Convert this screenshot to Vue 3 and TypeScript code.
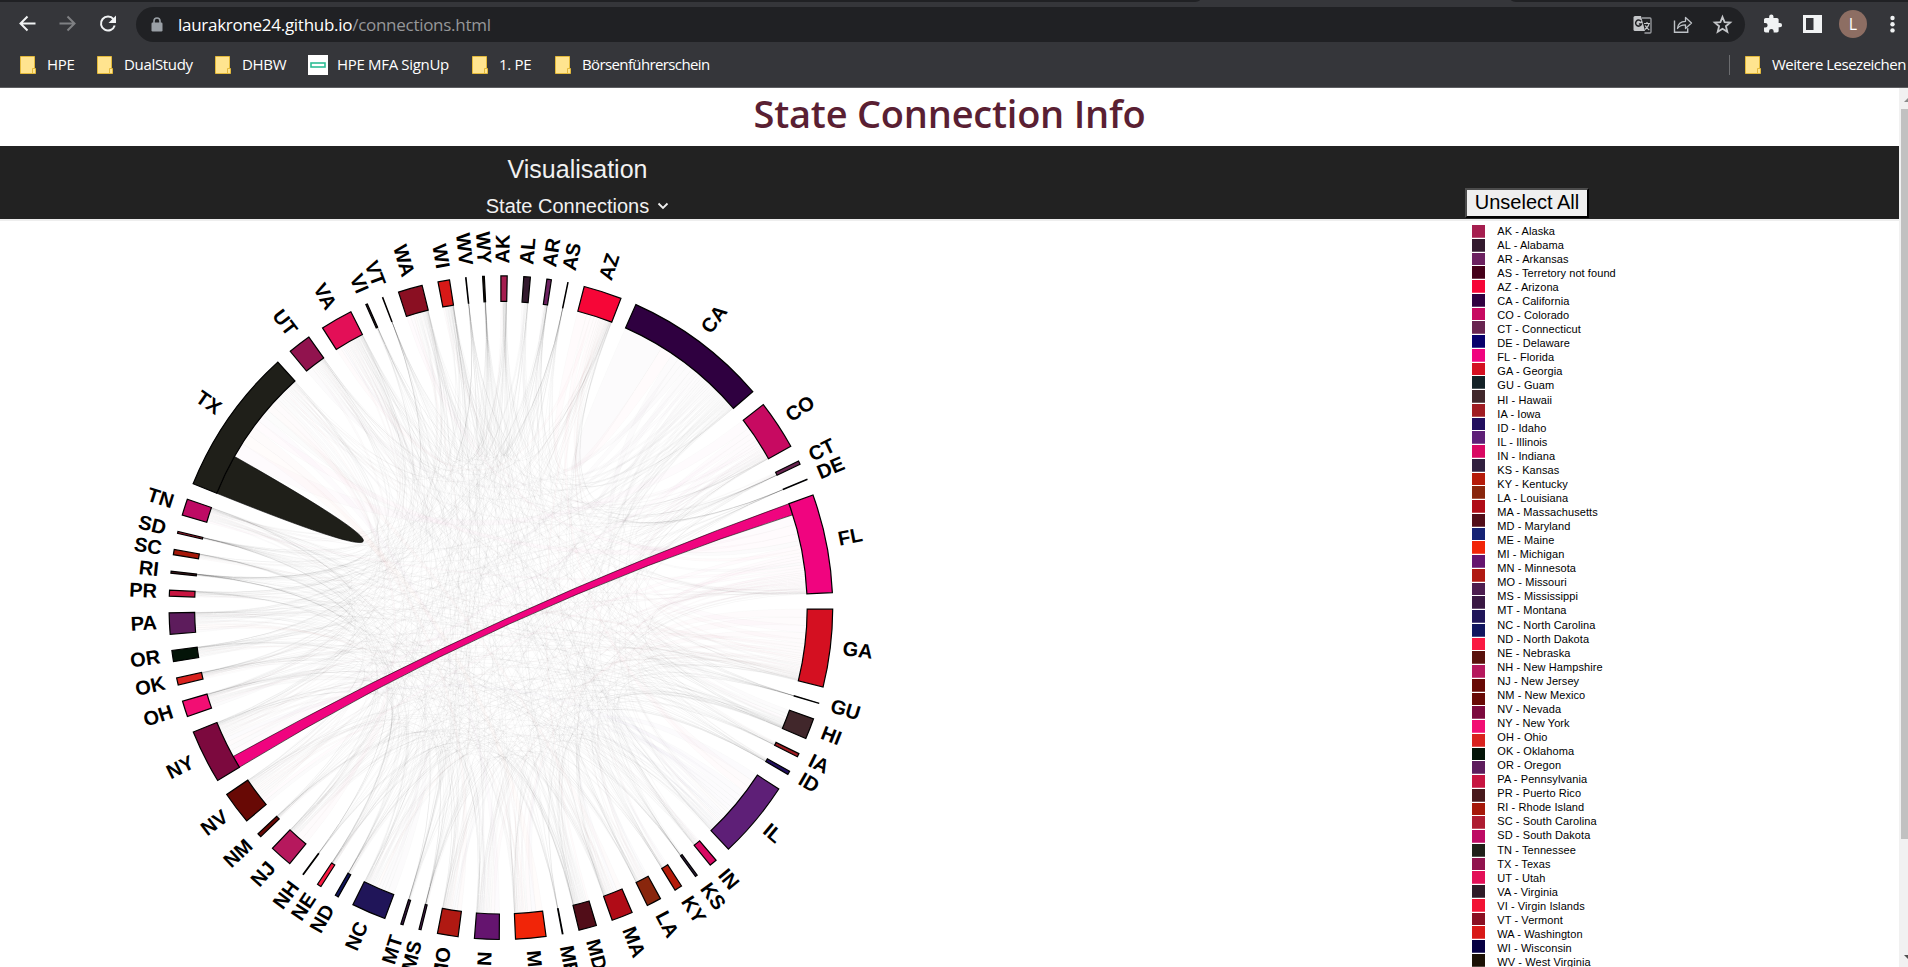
<script setup lang="ts">
interface Group { code: string; name: string; color: string; start: number; end: number }
interface Span { start: number; end: number }
interface Ribbon { d: string; color: string }

const raw: [string, string, string, number, number][] = [
  ['AK', 'Alaska', '#a51e4f', 0, 0.019],
  ['AL', 'Alabama', '#331a2e', 0.069, 0.089],
  ['AR', 'Arkansas', '#6c2160', 0.139, 0.1528],
  ['AS', 'Terretory not found', '#450019', 0.2028, 0.2038],
  ['AZ', 'Arizona', '#f60637', 0.2538, 0.3702],
  ['CA', 'California', '#2f0040', 0.419, 0.862],
  ['CO', 'Colorado', '#c70a61', 0.9122, 1.0627],
  ['CT', 'Connecticut', '#682450', 1.1127, 1.1235],
  ['DE', 'Delaware', '#07006c', 1.1735, 1.1745],
  ['FL', 'Florida', '#f0047f', 1.2243, 1.5253],
  ['GA', 'Georgia', '#d41021', 1.5753, 1.812],
  ['GU', 'Guam', '#132227', 1.8622, 1.8632],
  ['HI', 'Hawaii', '#41272b', 1.9123, 1.9762],
  ['IA', 'Iowa', '#a01c22', 2.0262, 2.0365],
  ['ID', 'Idaho', '#220f5f', 2.0865, 2.097],
  ['IL', 'Illinois', '#5e1f77', 2.149, 2.3859],
  ['IN', 'Indiana', '#d90862', 2.4359, 2.4587],
  ['KS', 'Kansas', '#31203f', 2.5087, 2.515],
  ['KY', 'Kentucky', '#b51b0a', 2.566, 2.589],
  ['LA', 'Louisiana', '#89260d', 2.64, 2.6845],
  ['MA', 'Massachusetts', '#b00c17', 2.735, 2.7996],
  ['MD', 'Maryland', '#510d18', 2.8497, 2.9039],
  ['ME', 'Maine', '#152274', 2.9535, 2.9555],
  ['MI', 'Michigan', '#f12508', 3.005, 3.0975],
  ['MN', 'Minnesota', '#65146f', 3.1465, 3.2215],
  ['MO', 'Missouri', '#b01912', 3.271, 3.334],
  ['MS', 'Mississippi', '#4c1d4f', 3.3848, 3.391],
  ['MT', 'Montana', '#391843', 3.441, 3.448],
  ['NC', 'North Carolina', '#201559', 3.499, 3.604],
  ['ND', 'North Dakota', '#10155f', 3.654, 3.664],
  ['NE', 'Nebraska', '#fa1a42', 3.7148, 3.7272],
  ['NH', 'New Hampshire', '#5a110c', 3.7785, 3.7805],
  ['NJ', 'New Jersey', '#b6185d', 3.8315, 3.901],
  ['NM', 'New Mexico', '#680905', 3.951, 3.963],
  ['NV', 'Nevada', '#680905', 4.0145, 4.1143],
  ['NY', 'New York', '#7c093e', 4.1645, 4.3282],
  ['OH', 'Ohio', '#f20e73', 4.3783, 4.4266],
  ['OK', 'Oklahoma', '#d9221e', 4.4773, 4.4992],
  ['OR', 'Oregon', '#041408', 4.549, 4.583],
  ['PA', 'Pennsylvania', '#5d1c5c', 4.632, 4.697],
  ['PR', 'Puerto Rico', '#c71440', 4.747, 4.7655],
  ['RI', 'Rhode Island', '#48191c', 4.8165, 4.8225],
  ['SC', 'South Carolina', '#a61809', 4.873, 4.889],
  ['SD', 'South Dakota', '#ae1c31', 4.9385, 4.944],
  ['TN', 'Tennessee', '#be0a64', 4.995, 5.0455],
  ['TX', 'Texas', '#1f1f19', 5.0952, 5.5457],
  ['UT', 'Utah', '#91134e', 5.5955, 5.666],
  ['VA', 'Virginia', '#e30f57', 5.7155, 5.814],
  ['VI', 'Virgin Islands', '#2f1b27', 5.864, 5.869],
  ['VT', 'Vermont', '#f21334', 5.9185, 5.9195],
  ['WA', 'Washington', '#8a0f22', 5.9695, 6.0435],
  ['WI', 'Wisconsin', '#d81917', 6.0925, 6.1277],
  ['WV', 'West Virginia', '#070043', 6.1767, 6.178],
  ['WY', 'Wyoming', '#1b1105', 6.228, 6.2332],
]
const groups: Group[] = raw.map(([code, name, color, start, end]) => ({ code, name, color, start, end }))

const CX = 500.9
const CY = 386.7
const INNER = 306.3
const OUTER = 331.8

const pt = (a: number, r: number): string => `${(Math.sin(a) * r).toFixed(2)},${(-Math.cos(a) * r).toFixed(2)}`

const arcPath = (g: Span): string =>
  `M${pt(g.start, OUTER)}A${OUTER},${OUTER} 0 0 1 ${pt(g.end, OUTER)}L${pt(g.end, INNER)}A${INNER},${INNER} 0 0 0 ${pt(g.start, INNER)}Z`

const ribbonPath = (s: Span, t: Span): string => {
  const first = `M${pt(s.start, INNER)}A${INNER},${INNER} 0 0 1 ${pt(s.end, INNER)}`
  if (s === t) return `${first}Q0,0 ${pt(s.start, INNER)}Z`
  return `${first}Q0,0 ${pt(t.start, INNER)}A${INNER},${INNER} 0 0 1 ${pt(t.end, INNER)}Q0,0 ${pt(s.start, INNER)}Z`
}

const labelTransform = (g: Group): string => {
  const mid = (g.start + g.end) / 2
  const turn = mid > Math.PI ? ' rotate(180)' : ''
  return `rotate(${((mid * 180) / Math.PI - 90).toFixed(3)}) translate(${OUTER + 12.5})${turn}`
}
const labelAnchor = (g: Group): 'start' | 'end' => ((g.start + g.end) / 2 > Math.PI ? 'end' : 'start')

let seed = 20231
const random = (): number => {
  seed = (seed * 1664525 + 1013904223) % 4294967296
  return seed / 4294967296
}

const size = groups.map(g => g.end - g.start)
const indexOf = (code: string): number => groups.findIndex(g => g.code === code)
const n = groups.length
const link: number[][] = groups.map(() => new Array<number>(n).fill(0))
for (let i = 0; i < n; i++) {
  for (let j = i; j < n; j++) {
    const keep = random() < 0.3 + 4 * Math.sqrt(size[i] * size[j])
    const w = keep ? 0.06 + Math.pow(random(), 3) : 0
    link[i][j] = link[j][i] = i === j ? w * 0.6 : w
  }
}
const pinned: Record<string, [number, number]> = {
  TX: [indexOf('TX'), 0.1335],
  FL: [indexOf('NY'), 0.0384],
  NY: [indexOf('FL'), 0.0407],
  CA: [indexOf('CA'), 0.135],
}
for (const [code, [target]] of Object.entries(pinned)) link[indexOf(code)][target] = 1

const spans: (Span | null)[][] = groups.map((g, i) => {
  const row: (Span | null)[] = new Array(n).fill(null)
  let cursor = g.start
  const pin = pinned[g.code]
  if (pin) {
    row[pin[0]] = { start: cursor, end: cursor + pin[1] }
    cursor += pin[1]
  }
  const rest = groups
    .map((_, j) => ({ j, w: link[i][j] * Math.pow(size[j] + 0.004, 0.6) }))
    .filter(e => e.w > 0 && !(pin && pin[0] === e.j))
    .sort((a, b) => b.w - a.w)
  const total = rest.reduce((sum, e) => sum + e.w, 0)
  const free = g.end - cursor
  for (const e of rest) {
    const next = cursor + (e.w / total) * free
    row[e.j] = { start: cursor, end: next }
    cursor = next
  }
  return row
})

const ribbons: Ribbon[] = []
const active: Ribbon[] = []
for (let i = 0; i < n; i++) {
  for (let j = i; j < n; j++) {
    const s = spans[i][j]
    const t = spans[j][i]
    if (!s || !t) continue
    const ribbon = { d: ribbonPath(s, t), color: groups[i].color }
    const selected = (groups[i].code === 'FL' && groups[j].code === 'NY') || (groups[i].code === 'TX' && i === j)
    ;(selected ? active : ribbons).push(ribbon)
  }
}

const bookmarks: { label: string; icon: 'folder' | 'page'; cls: string }[] = [
  { label: 'HPE', icon: 'folder', cls: 'b1' },
  { label: 'DualStudy', icon: 'folder', cls: 'b2' },
  { label: 'DHBW', icon: 'folder', cls: 'b3' },
  { label: 'HPE MFA SignUp', icon: 'page', cls: 'b4' },
  { label: '1. PE', icon: 'folder', cls: 'b5' },
  { label: 'Börsenführerschein', icon: 'folder', cls: 'b6' },
]
</script>

<template>
  <div class="window">
    <header class="browser">
      <div class="tabs"><i class="tab-left"></i><i class="tab-right"></i></div>
      <div class="toolbar">
        <svg class="nav-icons" width="136" height="36" viewBox="0 0 136 36" fill="none" stroke-width="2">
          <path d="M35.5 17.5H20.5M27.5 10.5l-7 7 7 7" stroke="#f1f3f4" />
          <path d="M59.500 17.5h15M67.500 10.500l7 7-7 7" stroke="#7f8083" />
          <path d="M113.500 13.200A7 7 0 1 0 114.700 19.500" stroke="#f1f3f4" />
          <path d="M116 9.500v7.500h-7.500z" fill="#f1f3f4" />
        </svg>
        <div class="omnibox">
          <svg class="lock" width="12" height="16" viewBox="0 0 12 16">
            <path d="M3 6V4a3 3 0 0 1 6 0v2" fill="none" stroke="#9aa0a6" stroke-width="1.600" />
            <rect x="0.500" y="5.500" width="11" height="9" rx="1.200" fill="#9aa0a6" />
          </svg>
          <span class="url"><b>laurakrone24.github.io</b><span>/connections.html</span></span>
          <svg class="box-icons" width="112" height="36" viewBox="1633 0 112 36">
            <path d="M1642 11h8a1 1 0 0 1 1 1v13a1 1 0 0 1-1 1h-5.500" fill="none" stroke="#9a9da1" stroke-width="1.300" />
            <path d="M1635 9h6l4 15h-10a1.500 1.500 0 0 1-1.500-1.500v-12A1.500 1.500 0 0 1 1635 9z" fill="#c4c6c9" />
            <path d="M1641 14.300a3 3 0 1 0 .5 2.600h-2.600" fill="none" stroke="#202124" stroke-width="1.500" />
            <path d="M1644 16.500h6M1647 15v1.500M1649 17c-.6 2.500-2.300 4-4 5.500M1645.200 18.500c1 2 2.300 3.300 4.100 4.500" fill="none" stroke="#c4c6c9" stroke-width="1.200" />
            <path d="M1674.500 13.500v11.800h13.200v-4" fill="none" stroke="#bdc1c6" stroke-width="1.400" />
            <path d="M1677.500 21.500c.4-4.600 3.600-7.200 8-7.200v-3.800l6 5.500-6 5.500v-3.600c-3.700 0-6.200 1-8 3.600z" fill="none" stroke="#bdc1c6" stroke-width="1.300" stroke-linejoin="round" />
            <path d="M1722.500 10l2.100 5.200 5.600.4-4.300 3.600 1.400 5.500-4.800-3-4.800 3 1.400-5.500-4.300-3.600 5.600-.4z" fill="none" stroke="#c4c6c9" stroke-width="1.800" />
          </svg>
        </div>
        <svg class="ext-icons" width="163" height="36" viewBox="1745 0 163 36">
          <path transform="translate(1762.300 6.600) scale(.86)" d="M20.500 11H19V7c0-1.100-.9-2-2-2h-4V3.500a2.500 2.500 0 0 0-5 0V5H4c-1.100 0-2 .9-2 2v3.800h1.500a2.700 2.700 0 0 1 0 5.400H2V20c0 1.100.9 2 2 2h3.800v-1.500a2.700 2.700 0 0 1 5.400 0V22H17c1.100 0 2-.9 2-2v-4h1.500a2.500 2.500 0 0 0 0-5z" fill="#f1f3f4" />
          <path d="M1803 8h19v18h-19z M1806 11v12h7.500v-12z" fill="#f1f3f4" fill-rule="evenodd" />
          <circle cx="1853" cy="17" r="14" fill="#8d6e63" />
          <text x="1853" y="22.800" text-anchor="middle" class="avatar">L</text>
          <circle cx="1892.500" cy="11" r="2.200" fill="#f1f3f4" />
          <circle cx="1892.500" cy="17.200" r="2.200" fill="#f1f3f4" />
          <circle cx="1892.500" cy="23.400" r="2.200" fill="#f1f3f4" />
        </svg>
      </div>
      <div class="bookmarks">
        <div v-for="b in bookmarks" :key="b.label" class="bookmark" :class="b.cls">
          <svg v-if="b.icon === 'folder'" width="16" height="18" viewBox="0 0 16 18">
            <path d="M.5.500h14v12h1v5H.5z" fill="#ffe48f" stroke="#e3b93a" />
            <path d="M12.500 17v-4.500h2.500" fill="none" stroke="#e3b93a" />
          </svg>
          <svg v-else width="20" height="20" viewBox="0 0 20 20">
            <rect width="20" height="20" fill="#fff" />
            <rect x="3" y="8" width="14" height="4" fill="#fff" stroke="#2dbd95" stroke-width="1.600" />
          </svg>
          <span>{{ b.label }}</span>
        </div>
        <div class="more">
          <svg width="16" height="18" viewBox="0 0 16 18">
            <path d="M.5.500h14v12h1v5H.5z" fill="#ffe48f" stroke="#e3b93a" />
            <path d="M12.500 17v-4.500h2.500" fill="none" stroke="#e3b93a" />
          </svg>
          <span>Weitere Lesezeichen</span>
        </div>
      </div>
    </header>

    <div class="viewport">
      <main class="page">
        <h1>State Connection Info</h1>
        <nav class="menu">
          <div class="links">
            <div class="visual">Visualisation</div>
            <div class="current">
              State Connections
              <svg width="12" height="8" viewBox="0 0 12 8"><path d="M1.500 1.500L6 6l4.500-4.500" fill="none" stroke="#f1f1f1" stroke-width="1.800" /></svg>
            </div>
          </div>
          <button type="button">Unselect All</button>
        </nav>
        <section class="content">
          <svg class="chart" width="1000" height="746" viewBox="0 0 1000 746">
            <g :transform="`translate(${CX},${CY})`">
              <path v-for="(r, i) in ribbons" :key="i" :d="r.d" :fill="r.color" class="ribbon" />
              <path v-for="(r, i) in active" :key="'a' + i" :d="r.d" :fill="r.color" class="ribbon active" />
              <g v-for="g in groups" :key="g.code">
                <path :d="arcPath(g)" :fill="g.color" class="arc" />
                <text class="code" dy=".26em" :transform="labelTransform(g)" :text-anchor="labelAnchor(g)">{{ g.code }}</text>
              </g>
            </g>
          </svg>
          <div class="legend">
            <div class="swatches">
              <svg v-for="g in groups" :key="g.code" width="13" height="12.750"><rect width="13" height="12.750" :fill="g.color" /></svg>
            </div>
            <ul>
              <li v-for="g in groups" :key="g.code">{{ g.code }} - {{ g.name }}</li>
            </ul>
          </div>
        </section>
      </main>
      <aside class="scrollbar">
        <svg width="9" height="21" viewBox="0 0 9 21"><path d="M5 14l5-5v5z" fill="#8b8b8b" /></svg>
        <div class="thumb"></div>
        <svg width="9" height="21" viewBox="0 0 9 21"><path d="M5 9h5v5z" fill="#505050" /></svg>
      </aside>
    </div>
  </div>
</template>

<style>
html, body { margin: 0; overflow: hidden; background: #fff; }
</style>

<style scoped>
.window { width: 1908px; height: 967px; overflow: hidden; display: flex; flex-direction: column; font-family: "Liberation Sans", Arial, sans-serif; }
.browser { height: 88px; box-sizing: border-box; flex: none; background: #35363a; border-bottom: 1px solid #5e5f62; font-family: "Open Sans", "Noto Sans", sans-serif; color: #fff; }
.tabs { height: 2px; display: flex; justify-content: space-between; }
.tab-left { width: 1200px; background: #202124; border-bottom-right-radius: 8px 2px; }
.tab-right { width: 397px; background: #202124; border-bottom-left-radius: 8px 2px; }
.toolbar { height: 35px; margin-top: 5px; display: flex; }
.nav-icons, .ext-icons { flex: none; }
.nav-icons { margin-top: -1px; }
.omnibox { flex: 1; height: 35px; border-radius: 18px; background: #202124; display: flex; align-items: center; }
.lock { margin-left: 15px; margin-right: 15px; }
.url { flex: 1; font-size: 17px; letter-spacing: -0.28px; color: #969799; white-space: nowrap; }
.url b { font-weight: 400; color: #fff; }
.avatar { font: 16px "Open Sans", sans-serif; fill: #fff; }
.bookmarks { height: 45px; display: flex; align-items: center; font-size: 15px; letter-spacing: -0.32px; padding-left: 20px; }
.bookmark, .more { display: flex; align-items: center; gap: 12px; white-space: nowrap; flex: none; }
.bookmark span, .more span { margin-top: -2px; margin-left: -1px; }
.b1 { width: 77px; } .b2 { width: 118px; } .b3 { width: 93px; } .b4 { width: 164px; gap: 10px; } .b5 { width: 83px; } .b6 { letter-spacing: -0.62px; }
.more { margin-left: auto; border-left: 1px solid #6b6c6f; height: 20px; padding-left: 15px; width: 163px; letter-spacing: -0.5px; }
.more svg { flex: none; }
.viewport { flex: 1; display: flex; min-height: 0; }
.page { width: 1899px; overflow: hidden; }
h1 { margin: 0; height: 58px; text-align: center; font: 600 38px/51px "Open Sans", "Noto Sans", sans-serif; letter-spacing: -0.22px; color: #5a1f33; }
.menu { height: 73px; background: #222; border-bottom: 2px solid #eee; display: flex; color: #f1f1f1; }
.links { width: 1155px; text-align: center; }
.visual { font-size: 25px; line-height: 28px; padding-top: 9px; }
.current { font-size: 20px; line-height: 24px; margin-top: 11px; display: flex; justify-content: center; align-items: center; gap: 8px; }
button { margin: 42px 0 0 310px; width: 124px; height: 30px; padding: 0 0 2px; box-sizing: border-box; border: 2px solid #000; border-color: #4c4c4c #000 #000 #4c4c4c; background: #efefef; font: 20px/24px "Liberation Sans", Arial, sans-serif; color: #000; }
.content { display: flex; height: 746px; }
.chart { flex: none; overflow: hidden; }
.arc { stroke: #000; stroke-width: 1.2; }
.ribbon { fill-opacity: 0.014; stroke: #000; stroke-opacity: 0.014; stroke-width: 1; }
.ribbon.active { fill-opacity: 1; stroke-opacity: 0.6; }
.code { font: bold 20px "Liberation Sans", Arial, sans-serif; fill: #000; }
.legend { display: flex; margin-left: 472px; gap: 12.3px; }
.swatches { width: 13px; padding-top: 4px; display: flex; flex-direction: column; gap: 1px; }
.swatches svg { display: block; flex: none; }
ul { list-style: none; margin: 0; padding: 2.800px 0 0; font-size: 11px; letter-spacing: 0.08px; line-height: 14.058px; color: #000; white-space: nowrap; }
.scrollbar { width: 9px; background: #f1f1f1; display: flex; flex-direction: column; }
.scrollbar svg { flex: none; display: block; }
.thumb { height: 730px; margin: 0 0 107px 2px; background: #c1c1c1; }
</style>
